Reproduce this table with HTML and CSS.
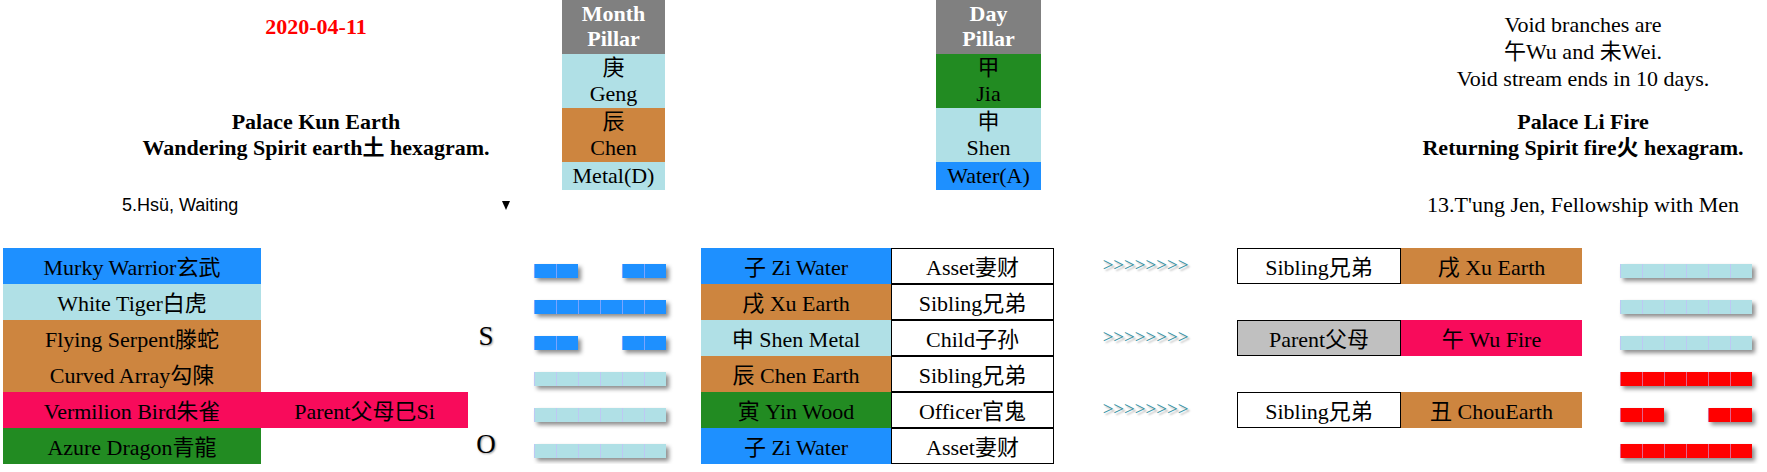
FILE: index.html
```html
<!DOCTYPE html>
<html>
<head>
<meta charset="utf-8">
<title>Hexagram</title>
<link rel="stylesheet" href="styles.css">
</head>
<body>
<div class="top">
  <div class="info-left">
    <div class="date">2020-04-11</div>
    <div class="palace">Palace Kun Earth<br>Wandering Spirit earth土 hexagram.</div>
    <div class="select-wrap">
      <select class="hex-select"><option>5.Hsü, Waiting</option></select>
      <span class="caret"></span>
    </div>
  </div>
  <div class="pillar">
    <div class="p-head">Month<br>Pillar</div>
    <div class="p-cell c-pb">庚<br>Geng</div>
    <div class="p-cell c-peru">辰<br>Chen</div>
    <div class="p-foot c-pb">Metal(D)</div>
  </div>
  <div class="gap"></div>
  <div class="pillar">
    <div class="p-head">Day<br>Pillar</div>
    <div class="p-cell c-green">甲<br>Jia</div>
    <div class="p-cell c-pb">申<br>Shen</div>
    <div class="p-foot c-blue">Water(A)</div>
  </div>
  <div class="info-right">
    <div class="void">Void branches are<br>午Wu and 未Wei.<br>Void stream ends in 10 days.</div>
    <div class="palace palace-r">Palace Li Fire<br>Returning Spirit fire火 hexagram.</div>
    <div class="hex-name">13.T'ung Jen, Fellowship with Men</div>
  </div>
</div>

<div class="chart">
  <!-- row 1 -->
  <div class="cell c-blue">Murky Warrior玄武</div>
  <div class="cell"></div>
  <div class="cell mark"></div>
  <div class="yao"><div class="grp c-blue"><i class="seg"></i><i class="seg"></i></div><div class="hole"></div><div class="grp c-blue"><i class="seg"></i><i class="seg"></i></div></div>
  <div class="cell c-blue">子 Zi Water</div>
  <div class="cell rel">Asset妻财</div>
  <div class="cell arrow">&gt;&gt;&gt;&gt;&gt;&gt;&gt;&gt;</div>
  <div class="cell rel">Sibling兄弟</div>
  <div class="cell c-peru">戌 Xu Earth</div>
  <div class="yao cyao"><div class="grp c-pb"><i class="seg"></i><i class="seg"></i><i class="seg"></i><i class="seg"></i><i class="seg"></i><i class="seg"></i></div></div>

  <!-- row 2 -->
  <div class="cell c-pb">White Tiger白虎</div>
  <div class="cell"></div>
  <div class="cell mark"></div>
  <div class="yao"><div class="grp c-blue"><i class="seg"></i><i class="seg"></i><i class="seg"></i><i class="seg"></i><i class="seg"></i><i class="seg"></i></div></div>
  <div class="cell c-peru">戌 Xu Earth</div>
  <div class="cell rel">Sibling兄弟</div>
  <div class="cell"></div>
  <div class="cell"></div>
  <div class="cell"></div>
  <div class="yao cyao"><div class="grp c-pb"><i class="seg"></i><i class="seg"></i><i class="seg"></i><i class="seg"></i><i class="seg"></i><i class="seg"></i></div></div>

  <!-- row 3 -->
  <div class="cell c-peru">Flying Serpent滕蛇</div>
  <div class="cell"></div>
  <div class="cell mark">S</div>
  <div class="yao"><div class="grp c-blue"><i class="seg"></i><i class="seg"></i></div><div class="hole"></div><div class="grp c-blue"><i class="seg"></i><i class="seg"></i></div></div>
  <div class="cell c-pb">申 Shen Metal</div>
  <div class="cell rel">Child子孙</div>
  <div class="cell arrow">&gt;&gt;&gt;&gt;&gt;&gt;&gt;&gt;</div>
  <div class="cell rel c-silver">Parent父母</div>
  <div class="cell c-pink">午 Wu Fire</div>
  <div class="yao cyao"><div class="grp c-pb"><i class="seg"></i><i class="seg"></i><i class="seg"></i><i class="seg"></i><i class="seg"></i><i class="seg"></i></div></div>

  <!-- row 4 -->
  <div class="cell c-peru">Curved Array勾陳</div>
  <div class="cell"></div>
  <div class="cell mark"></div>
  <div class="yao"><div class="grp c-pb"><i class="seg"></i><i class="seg"></i><i class="seg"></i><i class="seg"></i><i class="seg"></i><i class="seg"></i></div></div>
  <div class="cell c-peru">辰 Chen Earth</div>
  <div class="cell rel">Sibling兄弟</div>
  <div class="cell"></div>
  <div class="cell"></div>
  <div class="cell"></div>
  <div class="yao cyao"><div class="grp c-red"><i class="seg"></i><i class="seg"></i><i class="seg"></i><i class="seg"></i><i class="seg"></i><i class="seg"></i></div></div>

  <!-- row 5 -->
  <div class="cell c-pink">Vermilion Bird朱雀</div>
  <div class="cell c-pink">Parent父母巳Si</div>
  <div class="cell mark"></div>
  <div class="yao"><div class="grp c-pb"><i class="seg"></i><i class="seg"></i><i class="seg"></i><i class="seg"></i><i class="seg"></i><i class="seg"></i></div></div>
  <div class="cell c-green">寅 Yin Wood</div>
  <div class="cell rel">Officer官鬼</div>
  <div class="cell arrow">&gt;&gt;&gt;&gt;&gt;&gt;&gt;&gt;</div>
  <div class="cell rel">Sibling兄弟</div>
  <div class="cell c-peru">丑 ChouEarth</div>
  <div class="yao cyao"><div class="grp c-red"><i class="seg"></i><i class="seg"></i></div><div class="hole"></div><div class="grp c-red"><i class="seg"></i><i class="seg"></i></div></div>

  <!-- row 6 -->
  <div class="cell c-green">Azure Dragon青龍</div>
  <div class="cell"></div>
  <div class="cell mark">O</div>
  <div class="yao"><div class="grp c-pb"><i class="seg"></i><i class="seg"></i><i class="seg"></i><i class="seg"></i><i class="seg"></i><i class="seg"></i></div></div>
  <div class="cell c-blue">子 Zi Water</div>
  <div class="cell rel">Asset妻财</div>
  <div class="cell"></div>
  <div class="cell"></div>
  <div class="cell"></div>
  <div class="yao cyao"><div class="grp c-red"><i class="seg"></i><i class="seg"></i><i class="seg"></i><i class="seg"></i><i class="seg"></i><i class="seg"></i></div></div>
</div>
</body>
</html>
```

FILE: styles.css
```css
* { box-sizing: border-box; }

body {
  margin: 0;
  background: #fff;
  color: #000;
  font-family: "Liberation Serif", "Noto Sans CJK SC", serif;
  font-size: 22px;
}

/* colours */
.c-blue { background: #1e90ff; }
.c-pb { background: #b0e0e6; }
.c-peru { background: #cd853f; }
.c-green { background: #228b22; }
.c-pink { background: #f80b5b; }
.c-silver { background: #c0c0c0; }
.c-red { background: #ff0000; }

/* ---------- top area ---------- */
.top {
  display: grid;
  grid-template-columns: 562px 103px 271px 105px 1fr;
  height: 248px;
}

.info-left {
  padding: 14px 0 0 70px;
  text-align: center;
}

.date {
  color: #ff0000;
  font-weight: bold;
  line-height: 26px;
}

.palace {
  font-weight: bold;
  line-height: 26px;
  margin-top: 69px;
}

.select-wrap {
  display: flex;
  align-items: center;
  justify-content: space-between;
  width: 388px;
  margin: 33px 0 0 52px;
}

.hex-select {
  appearance: none;
  -webkit-appearance: none;
  border: none;
  background: transparent;
  padding: 0;
  margin: 0;
  color: #000;
  font-family: "Liberation Sans", Arial, sans-serif;
  font-size: 18px;
  line-height: 22px;
}

.caret {
  width: 0;
  height: 0;
  border-left: 4.5px solid transparent;
  border-right: 4.5px solid transparent;
  border-top: 9px solid #000;
}

.pillar {
  text-align: center;
  line-height: 26px;
}

.p-head {
  height: 54px;
  padding-top: 1px;
  line-height: 25px;
  background: #808080;
  color: #fff;
  font-weight: bold;
}

.p-cell {
  height: 54px;
  padding-top: 1px;
}

.p-foot {
  height: 28px;
  line-height: 28px;
}

.info-right {
  padding: 11px 0 0 358px;
  text-align: center;
}

.void {
  line-height: 27px;
}

.palace-r {
  margin-top: 17px;
}

.hex-name {
  line-height: 26px;
  margin-top: 31px;
}

/* ---------- chart ---------- */
.chart {
  display: grid;
  grid-template-columns: 258px 207px 36px 197px 190px 163px 183px 164px 181px 1fr;
  grid-auto-rows: 36px;
  margin-left: 3px;
}

.cell {
  display: flex;
  align-items: center;
  justify-content: center;
  white-space: nowrap;
  padding-bottom: 3px;
}

.rel {
  border: 1px solid #000;
}

.mark {
  font-size: 27px;
  text-shadow: 1px 1px 2px #999;
}

.arrow {
  color: #2f8fa0;
  font-size: 19px;
  text-shadow: 2px 2px 2px #aaa;
}

.yao {
  display: flex;
  align-items: flex-start;
  padding: 16px 0 0 30px;
}

.cyao {
  padding-left: 38px;
}

.grp {
  display: flex;
  box-shadow: 3px 3px 4px rgba(0, 0, 0, 0.45);
}

.seg {
  display: block;
  width: 22px;
  height: 14px;
  border-left: 1px solid rgba(200, 180, 255, 0.55);
}

.hole {
  width: 44px;
}
```
